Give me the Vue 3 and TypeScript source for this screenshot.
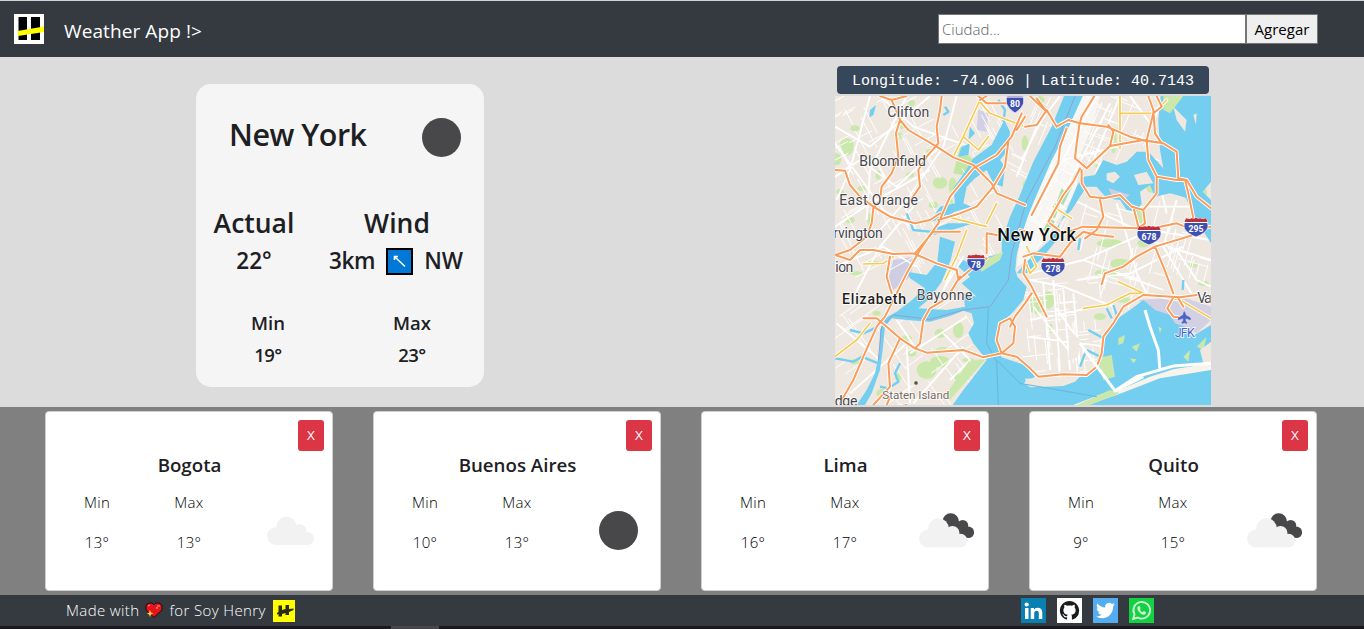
<script setup lang="ts">
import { ref } from 'vue'

interface City {
  name: string
  min: number
  max: number
  icon: 'cloud' | 'clear' | 'broken'
}

const query = ref('')

const cities = ref<City[]>([
  { name: 'Bogota', min: 13, max: 13, icon: 'cloud' },
  { name: 'Buenos Aires', min: 10, max: 13, icon: 'clear' },
  { name: 'Lima', min: 16, max: 17, icon: 'broken' },
  { name: 'Quito', min: 9, max: 15, icon: 'broken' },
])

function removeCity(name: string) {
  cities.value = cities.value.filter((c) => c.name !== name)
}

// Small local streets: short strokes following the direction of each district.
function streets(x: number, y: number, w: number, h: number, angle: number, gap: number, seed: number): string {
  let s = seed
  const rnd = () => {
    s = (s * 16807) % 2147483647
    return s / 2147483647
  }
  let d = ''
  const a = (angle * Math.PI) / 180
  const n = Math.floor((w * h) / (gap * gap * 4))
  for (let i = 0; i < n; i++) {
    const t = rnd() > 0.5 ? a : a + Math.PI / 2
    const px = x + rnd() * w
    const py = y + rnd() * h
    const len = gap * (1.5 + rnd() * 3)
    d += `M${px.toFixed(0)} ${py.toFixed(0)}l${(Math.cos(t) * len).toFixed(0)} ${(Math.sin(t) * len).toFixed(0)}`
  }
  return d
}

const minor = [
  streets(15, 108, 500, 500, 62, 24, 7),
  streets(620, 108, 380, 220, 112, 18, 31),
  streets(570, 300, 170, 240, 118, 14, 77),
  streets(760, 420, 380, 260, 15, 24, 51),
  streets(590, 640, 260, 300, 84, 18, 93),
  streets(15, 700, 420, 330, 55, 34, 12),
].join('')

// Parks as blots: x, y, rx, ry
const parks = [
  [50, 260, 22, 26], [20, 298, 14, 18], [75, 205, 14, 9], [205, 228, 14, 10], [215, 195, 8, 12], [330, 368, 22, 18],
  [368, 378, 12, 26], [310, 435, 14, 10], [360, 435, 10, 20], [95, 385, 12, 8], [145, 345, 8, 14], [300, 275, 12, 8],
  [30, 395, 12, 8], [60, 480, 14, 10], [240, 345, 12, 8], [245, 130, 10, 10], [120, 480, 8, 20], [400, 300, 18, 24],
  [590, 375, 12, 16], [630, 120, 14, 12], [585, 250, 10, 24], [815, 318, 20, 8], [966, 384, 18, 14], [850, 240, 10, 40],
  [940, 550, 18, 12], [930, 460, 12, 30], [1115, 400, 16, 22], [840, 550, 40, 12], [830, 640, 36, 12], [870, 610, 32, 14],
  [620, 735, 24, 26], [655, 720, 18, 26], [880, 720, 24, 8], [810, 770, 18, 10], [740, 850, 22, 10], [660, 805, 8, 14],
  [230, 835, 16, 9], [330, 820, 16, 14], [340, 870, 22, 9], [385, 810, 16, 24], [245, 880, 14, 10], [290, 930, 30, 26],
  [330, 905, 30, 18], [205, 950, 10, 12], [155, 1000, 16, 14], [75, 905, 16, 8], [140, 760, 12, 8], [415, 900, 18, 6],
  [380, 950, 8, 18], [80, 640, 20, 6], [130, 610, 22, 8], [350, 620, 14, 7], [1090, 615, 14, 8], [1120, 670, 16, 8],
]

const yellowRoads =
  'M450 120L400 230L370 290M400 230L445 270L475 230M500 430L470 490M445 120L480 160L585 200M585 600L600 640L620 620M410 510L380 590L345 660M120 790L80 840L15 890M100 612L160 610L190 590M350 470L470 500M760 745L830 735L900 700L930 700M865 665L940 700L1050 720L1143 775M870 108V265M870 160H970L1010 120M670 440L725 475M590 560L620 620'

const shields = [
  { x: 555, y: 127, w: 54, h: 64, n: '80' },
  { x: 438, y: 609, w: 56, h: 52, n: '78' },
  { x: 669, y: 622, w: 74, h: 58, n: '278' },
  { x: 957, y: 526, w: 74, h: 58, n: '678' },
  { x: 1098, y: 502, w: 74, h: 58, n: '295' },
]
</script>

<template>
  <div class="app">
    <header class="nav">
      <svg class="brand" viewBox="0 0 30 30">
        <rect width="30" height="30" fill="#fff" />
        <path d="M4.500 3H13V26H4.500ZM17 3H26V26H17Z" fill="#000" />
        <path d="M3.500 17L30 12.500V18L4 22Z" fill="#ff0" />
      </svg>
      <span class="title">Weather App !&gt;</span>
      <form class="search" @submit.prevent>
        <input v-model="query" type="text" placeholder="Ciudad..." />
        <button type="submit">Agregar</button>
      </form>
    </header>

    <main class="detail">
      <section class="current">
        <div class="head">
          <h2>New York</h2>
          <svg class="moon" viewBox="0 0 40 40"><circle cx="19.500" cy="20.500" r="19.500" fill="#48484a" /></svg>
        </div>
        <div class="now">
          <div class="col actual">
            <h3>Actual</h3>
            <p>22°</p>
          </div>
          <div class="col wind">
            <h3>Wind</h3>
            <p>
              <span class="speed">3km</span>
              <svg class="arrow" viewBox="0 0 27 27">
                <rect x="1" y="1" width="25" height="25" fill="#0078d7" stroke="#000" stroke-width="2" />
                <path d="M19 18.500L9 9M8.500 12V8.500H12" fill="none" stroke="#fff" stroke-width="1.600" />
              </svg>
              <span class="dir">NW</span>
            </p>
          </div>
        </div>
        <div class="range">
          <div><h5>Min</h5><p>19°</p></div>
          <div><h5>Max</h5><p>23°</p></div>
        </div>
      </section>

      <section class="location">
        <div class="coords">Longitude: -74.006 | Latitude: 40.7143</div>
        <svg class="map" viewBox="15 108 1128 927" preserveAspectRatio="none">
          <rect x="15" y="108" width="1128" height="927" fill="#efe8e1" />
          <!-- Manhattan and airports -->
          <path d="M760 108L660 300L575 500L560 620L600 600L690 470L740 390L745 300L790 190L810 108Z" fill="#f8f6f3" />
          <path d="M190 600L255 590L240 650L190 690L175 660Z" fill="#cfcde2" />
          <path d="M445 150L475 160L470 215L440 210Z" fill="#d3d0e4" />
          <path d="M925 720L1060 712L1143 740V780L1100 820L1060 800L1010 790L960 750Z" fill="#d3d0e4" />

          <g fill="#cbe8ac">
            <ellipse v-for="(p, i) in parks" :key="i" :cx="p[0]" :cy="p[1]" :rx="p[2]" :ry="p[3]" />
          </g>
          <path d="M390 260L440 310L420 350L370 340Z" fill="#c3e5a5" />

          <path :d="minor" fill="none" stroke="#fff" stroke-width="3" />
          <path
            d="M15 200L120 260L300 108M120 108L60 330L20 420M15 350L90 300L200 380L330 260M380 108L340 260L230 420L150 510M15 250L160 450L260 510M230 108L120 330L110 480M420 260L250 200L150 108M15 500L120 430L300 330M15 620L160 560L260 620M60 730L150 560L250 440M560 350L620 200L690 108M575 300L650 150M620 450L800 108M650 500L840 130M700 300L900 250M790 300L870 108M900 108L960 190L1010 108M730 420L900 500L1143 540M760 600L920 530L1143 600M740 660L900 640L1060 560M600 640L760 600L1000 690M860 430L900 560L920 640L950 700M600 660L700 680L850 740M610 740L740 900M640 670L660 930M670 660L690 930M700 690L720 930M730 700L750 920M600 780L800 740M590 830L830 860M680 745L850 995M1040 420L1000 560L1090 710M1040 570L1100 660L1143 680M240 880L410 770M400 860L250 1030M230 860L240 1030M60 1000L230 850M20 790L150 900M340 820L420 900L360 960M200 780L260 870M380 600L340 690L400 590M980 330L1010 460M920 440L1080 440"
            fill="none" stroke="#fff" stroke-width="5.500" stroke-linejoin="round"
          />

          <!-- Water -->
          <g fill="#73cef0">
            <path d="M702 108H758L715 205L663 305L620 405L595 465L575 525L560 585L556 630L562 650L590 680L580 720L550 755L515 790L502 830L505 870L515 892L585 915L615 950L580 970L600 980L735 965L755 945L800 925L815 900L820 850L840 800L870 770L900 750L940 720L975 750L1020 765L1035 790L1065 800L1085 830L1143 795V1035H368L400 990L470 900L430 850L415 820L432 790L425 760L400 752L360 768L300 785L230 780L185 775L165 800L158 870L150 930L125 1000L105 1035H80L110 990L135 940L148 880L150 810L165 775L200 755L240 725L285 685L240 655L232 635L290 645L322 605L330 530L375 545L362 600L335 665L300 715L265 745L350 750L405 740L400 700L440 710L395 670L420 650L385 620L400 600L440 620L475 590L515 580L515 545L540 470L570 405L610 305L665 200Z" />
            <path d="M992 108H1143V365L1118 395L1143 420V550L1090 465L1068 414L1045 405L1040 350L1000 325L990 270L985 180Z" />
            <path d="M660 540L710 450L742 375L762 350L795 345L820 300L860 315L890 305L920 275L955 275L1000 325L1045 345L1060 410L1020 400L975 410L960 375L930 395L935 430L920 455L890 450L870 420L830 415L800 380L770 380L750 410L725 450L690 485L680 540L640 590L590 640L560 640L590 605Z" />
            <path d="M523 180L540 215L535 270L510 300L525 320L518 380L490 370L470 330L435 355L410 380L400 430L425 440L375 455L340 475L300 485L330 440L375 430L370 385L405 335L430 295L485 255L505 215Z" />
            <path d="M120 150L138 135L130 165L118 172ZM420 200L435 220L415 240ZM395 260L420 250L415 285L385 290ZM300 510L355 490L430 490L350 515L310 525Z" />
          </g>
          <g fill="none" stroke="#73cef0" stroke-width="7" stroke-linejoin="round">
            <path d="M15 895L70 905L95 890L145 910M60 810L100 820L145 800M210 910L195 940L205 965L175 985L150 980M230 460L250 510L300 515M345 140L355 155L340 165M505 120L525 150L520 185M830 745L845 775M850 735L860 765M775 810L820 835M770 870L810 890L800 920M765 880L750 920M1060 660L1058 690M750 535L745 570" />
          </g>

          <!-- Land in the water -->
          <g fill="#efe8e1">
            <path d="M830 340L855 335L870 350L850 370L830 360ZM912 345L950 335L970 370L925 375ZM1030 140L1070 180L1065 215L1040 180ZM1090 165L1100 160L1098 195ZM585 962L715 955L735 965L700 978L600 982ZM585 956L620 955L590 970Z" />
            <path d="M1143 910L1030 928L960 950L880 985L820 1000L730 1035H770L860 1005L990 955L1143 930Z" fill="#f8f4ec" />
            <path d="M740 1035L840 990L870 1000L780 1035ZM800 895L845 885L855 950L820 960Z" fill="#cbe8ac" />
            <path d="M865 835L885 825L880 850L865 855ZM905 860L930 850L920 875ZM900 895L920 898L910 910ZM1060 890L1080 870L1075 905ZM985 800L995 805L990 820ZM1100 860L1130 830L1120 870ZM440 610L520 575L510 600L455 635ZM1000 108H1060L1020 160L1000 150ZM415 905L470 895L360 1020L340 1015Z" fill="#cbe8ac" />
            <path d="M720 810L750 840L745 890L715 900ZM1143 845L1110 870L1120 910L1143 905Z" />
          </g>
          <path d="M835 385L900 405L885 415L845 405Z" fill="#cfcde2" />
          <path d="M690 430L715 380L735 340L750 330L700 435ZM650 520L668 480L675 485Z" fill="#a9deb8" />
          <path d="M640 510L655 480L670 480L655 520ZM662 470L675 430L690 435L675 475ZM680 425L695 385L705 395L690 430Z" fill="#b5dfa0" />

          <!-- Ferry and boundary lines -->
          <g fill="none" stroke-width="3">
            <path d="M735 108L675 260L590 420L545 580L535 660L480 740L400 750L300 778L190 765L155 800L145 900" stroke="#8fa3cf" />
            <path d="M475 745L470 850L500 905L505 1035M500 900L570 970L800 1010" stroke="#68b5dd" />
          </g>

          <!-- Secondary highways -->
          <g fill="none" stroke-linejoin="round" stroke-linecap="round">
            <path v-for="k in 2" :key="k" :d="yellowRoads" :stroke="k === 1 ? '#fff' : '#f6cb55'" :stroke-width="k === 1 ? 10 : 5" />
          </g>

          <!-- Interstates -->
          <g fill="none" stroke-linejoin="round" stroke-linecap="round">
            <path v-for="k in 2" :key="k" :stroke="k === 1 ? '#fff' : '#fa9c5a'" :stroke-width="k === 1 ? 11.500 : 6"
              d="M150 108L185 120L210 180L235 210L320 260L370 292L430 315L485 370L500 400L585 435M210 180L198 220L205 290L185 340L155 380L150 420L130 445L125 490L110 530L60 570L15 585M15 330L45 332L60 375L90 410L130 440L180 470L255 490L300 480L330 460M185 120L230 108M335 108L330 150L320 200L325 250L290 290L265 330L270 380L235 430M445 108L470 130L530 130M575 160L545 230L500 285L430 325L360 410L325 490L300 525L270 570L230 640L200 700L165 770L140 800L100 890L70 960L30 1030M585 170L560 210M535 245L525 320L490 380L440 440L390 460L325 480M470 108L450 120M585 200L620 195L650 150L680 200L715 180L750 190L830 200L900 230L945 242L1000 250L1040 275L1045 355L1070 360L1100 410L1143 445M650 155L620 115M650 155L600 108M793 108L755 170L748 195L740 250L735 295L770 325L840 258L850 215L835 195M840 258L940 240L1000 250M980 108L995 140L970 160L950 240L955 300L980 350L980 400L940 450L905 440L870 405L820 415L780 410L755 370L755 330M980 350L1040 360L1065 360L1075 400L1090 475M955 108L970 150L975 220L995 250M810 420L820 470L800 510L765 535M940 450L945 490L925 505L760 500L700 520L660 490M910 440L925 500M710 205L690 260L685 310L605 465M655 485L700 405L730 365L750 325M570 510L605 520L600 530M1143 500L1090 510L1040 490L945 510M690 590L720 550L760 515L800 525L850 530M580 590L610 580L690 590M585 600L580 640L605 680L650 770M605 700L585 730L555 770L540 800M15 585L60 600L90 570L130 570L190 582L255 580L310 515L390 515M180 590L170 650L185 700M255 582L320 610L380 630L385 660L420 630L470 595M470 580L470 520L500 525M390 650L350 715L300 745L280 780L270 850L255 865M100 775L140 775L170 800L210 835L255 865L290 878L400 870L460 892L515 880L550 850L555 800L540 775L510 790L500 840L515 880L560 890L600 925L625 950L700 943L770 945L800 920L815 880L820 830L850 790L880 740L940 705L1050 712L1100 705M210 835L175 910L180 980L130 1035M815 673L825 640L880 620L920 590L975 560L1090 525M975 560L1000 620L1030 700M1030 712L1012 745L1030 770L1045 772M1045 715L1060 740M170 1035L185 1000M230 1035L205 1040" />
          </g>

          <path d="M1143 910L1030 918L920 950L855 992L790 905L750 850M855 992L940 950M945 750L960 800L985 870L990 930" fill="none" stroke="#fff" stroke-width="9" />

          <g v-for="s in shields" :key="s.n" :transform="`translate(${s.x - s.w / 2} ${s.y - s.h / 2}) scale(${s.w / 60} ${s.h / 56})`">
            <path d="M6 2Q14 6 20 2Q26 5 30 0Q34 5 40 2Q46 6 54 2Q62 20 58 32Q52 46 30 56Q8 46 2 32Q-2 20 6 2Z" fill="#3f4fb0" stroke="#fff" stroke-width="2" />
            <path d="M6 2Q14 6 20 2Q26 5 30 0Q34 5 40 2Q46 6 54 2L58 12H2Z" fill="#c42d32" />
            <path d="M1 14H59" stroke="#fff" stroke-width="3" />
          </g>
          <g class="num">
            <text v-for="s in shields" :key="s.n" :x="s.x" :y="s.y + 14">{{ s.n }}</text>
          </g>

          <g class="labels">
            <text x="172" y="171" textLength="126">Clifton</text>
            <text x="88" y="319" textLength="200">Bloomfield</text>
            <text x="28" y="434" textLength="236">East Orange</text>
            <text x="10" y="535" textLength="148">rvington</text>
            <text x="16" y="635" textLength="54">ion</text>
            <text x="260" y="719" textLength="167">Bayonne</text>
            <text x="14" y="1037" textLength="68">dge</text>
            <text x="1102" y="730" textLength="60">Van</text>
            <text class="strong" x="36" y="732" textLength="192">Elizabeth</text>
            <text class="big" x="502" y="542" textLength="236">New York</text>
            <text class="small" x="157" y="1017" textLength="201">Staten Island</text>
            <text class="blue" x="1034" y="830" textLength="60">JFK</text>
          </g>
          <circle cx="258" cy="969" r="6" fill="#4b5a3c" stroke="#fff" />
          <path d="M1063 755Q1066 757 1066 765L1081 774V779L1066 774V783L1070 787V790L1063 788L1056 790V787L1060 783V774L1045 779V774L1060 765Q1060 757 1063 755Z" fill="#4a63c8" stroke="#4a63c8" stroke-width="2" />
        </svg>
      </section>
    </main>

    <section class="cities">
      <article v-for="c in cities" :key="c.name" class="card">
        <button class="close" @click="removeCity(c.name)">X</button>
        <h5>{{ c.name }}</h5>
        <div class="stats">
          <div class="stat"><span>Min</span><span>{{ c.min }}°</span></div>
          <div class="stat"><span>Max</span><span>{{ c.max }}°</span></div>
          <svg class="icon" viewBox="0 0 60 60">
            <circle v-if="c.icon === 'clear'" cx="32.500" cy="37.500" r="19.500" fill="#48484a" />
            <g v-else-if="c.icon === 'cloud'" fill="#f2f2f2">
              <circle cx="18" cy="43" r="9" />
              <circle cx="28.500" cy="33.500" r="10" />
              <circle cx="41.500" cy="38" r="7" />
              <circle cx="49.500" cy="45.500" r="6.500" />
              <path d="M18 36L28 30L42 36L50 44V52H18Z" />
            </g>
            <template v-else>
              <g fill="#48484a">
                <circle cx="36.700" cy="28.500" r="8.300" />
                <circle cx="48.700" cy="32.500" r="5.500" />
                <circle cx="54.300" cy="39.300" r="5.800" />
                <path d="M37 29L50 31L54 42L44 42Z" />
              </g>
              <g fill="#f2f2f2">
                <circle cx="14" cy="45.500" r="9" />
                <circle cx="24.500" cy="35.500" r="10.300" />
                <circle cx="38.500" cy="40" r="7" />
                <circle cx="46.500" cy="47.500" r="6.800" />
                <path d="M14 40L24 32L38 38L47 46V54.300H14Z" />
              </g>
            </template>
          </svg>
        </div>
      </article>
    </section>

    <footer class="foot">
      <span class="made">Made with</span>
      <svg class="heart" viewBox="0 0 18 16">
        <path d="M9 15.500L1 8V3L4 1H7L9 3L11 1H14L17 3V8Z" fill="#e8121c" stroke="#111" stroke-width="1" />
        <path d="M3 4L5 3M12 4H15" stroke="#ff8d8d" stroke-width="1.200" />
        <path d="M5 8L6 10.500L8.500 11.500L6 12.500L5 15L4 12.500L2 11.500L4 10.500ZM12 5L13 6L12 7L11 6Z" fill="#ffc832" />
      </svg>
      <span class="for">for Soy Henry</span>
      <svg class="henry" viewBox="0 0 22 22">
        <rect width="22" height="22" fill="#ff0" />
        <path d="M5.500 5.500H9V10L12.500 9V5H16V9L20.500 8.500V10L16 12V15H12.500V13L9 14V16.500H5.500V14L4 14.500V13L5.500 12Z" fill="#2a2a18" />
      </svg>
      <nav class="social">
        <svg viewBox="0 0 25 25">
          <rect width="25" height="25" fill="#0a7fb2" />
          <path d="M4 10H7.500V21H4ZM9.700 10H13V11.500Q14.200 9.700 16.700 9.700Q21.300 9.700 21.300 15V21H17.800V15.500Q17.800 12.700 15.700 12.700Q13.200 12.700 13.200 15.500V21H9.700Z" fill="#fff" />
          <circle cx="5.700" cy="6.500" r="2.100" fill="#fff" />
        </svg>
        <svg viewBox="0 0 25 25">
          <rect width="25" height="25" fill="#fff" />
          <path transform="translate(2.900 2.900) scale(1.200)" fill="#1b1b1d" d="M8 0C3.580 0 0 3.580 0 8c0 3.540 2.290 6.530 5.470 7.590.4.070.55-.17.55-.38 0-.19-.01-.82-.01-1.490-2.010.37-2.530-.49-2.690-.94-.09-.23-.48-.94-.82-1.130-.28-.15-.68-.52-.01-.53.63-.01 1.080.58 1.230.82.72 1.210 1.870.87 2.330.66.07-.52.28-.87.51-1.070-1.780-.2-3.640-.89-3.640-3.950 0-.87.31-1.590.82-2.150-.08-.2-.36-1.020.08-2.120 0 0 .67-.21 2.200.82.64-.18 1.320-.27 2-.27s1.360.09 2 .27c1.530-1.040 2.200-.82 2.200-.82.44 1.100.16 1.920.08 2.120.51.56.82 1.270.82 2.150 0 3.070-1.870 3.750-3.650 3.950.29.25.54.73.54 1.480 0 1.070-.01 1.930-.01 2.200 0 .21.15.46.55.38A8.010 8.010 0 0 0 16 8c0-4.420-3.580-8-8-8z" />
        </svg>
        <svg viewBox="0 0 25 25">
          <rect width="25" height="25" fill="#55acee" />
          <path transform="translate(3 3) scale(.79)" fill="#fff" d="M23.950 4.570a10 10 0 0 1-2.820.77 4.960 4.960 0 0 0 2.160-2.720c-.95.55-2 .96-3.130 1.180a4.920 4.920 0 0 0-8.380 4.480C7.690 8.090 4.070 6.130 1.640 3.160a4.820 4.820 0 0 0-.67 2.480c0 1.710.87 3.210 2.190 4.100a4.900 4.900 0 0 1-2.230-.62v.06a4.920 4.920 0 0 0 3.950 4.830 5 5 0 0 1-2.210.08 4.940 4.940 0 0 0 4.600 3.420A9.870 9.870 0 0 1 0 19.540a13.990 13.990 0 0 0 7.550 2.210c9.050 0 14-7.500 14-13.980 0-.21 0-.42-.02-.63a9.940 9.940 0 0 0 2.420-2.570z" />
        </svg>
        <svg viewBox="0 0 25 25">
          <rect width="25" height="25" fill="#16d043" />
          <path d="M4.200 20.800L5.500 16.300A8.300 8.300 0 1 1 8.700 19.500Z" fill="none" stroke="#c8f7d0" stroke-width="1.900" />
          <path d="M9.500 8.200Q10.700 7.700 11.100 9L11.600 10.300L10.800 11.400Q11.800 13.400 13.800 14.200L14.900 13.100L17 14.200Q17.200 16.200 15 16.700Q12.700 16.900 10.200 14.200Q7.500 11 8.500 9Z" fill="#c8f7d0" />
        </svg>
      </nav>
    </footer>
    <div class="edge"><span></span></div>
  </div>
</template>

<style>
body {
  margin: 0;
  overflow: hidden;
}
</style>

<style scoped>
* {
  box-sizing: border-box;
}
h2, h3, h5, p {
  margin: 0;
}
svg {
  display: block;
  flex: none;
}
.app {
  width: 1364px;
  height: 629px;
  display: flex;
  flex-direction: column;
  overflow: hidden;
  font-family: "Open Sans", "Noto Sans", sans-serif;
  color: #1d2023;
}
.nav {
  height: 57px;
  border-top: 1px solid #ccd5d9;
  background: #343a40;
  display: flex;
  align-items: center;
  padding: 0 46px 0 14px;
}
.brand {
  width: 30px;
  height: 30px;
}
.title {
  margin-left: 20px;
  margin-top: 4px;
  color: #fff;
  font-size: 19px;
  letter-spacing: 0.1px;
  line-height: 30px;
}
.search {
  margin-left: auto;
  display: flex;
}
.search input {
  width: 308px;
  height: 30px;
  border: 1px solid #767676;
  border-radius: 0;
  padding: 1px 3px;
  background: #fff;
  font: 300 15px "Open Sans", sans-serif;
}
.search input::placeholder {
  color: #606060;
}
.search button {
  width: 72px;
  height: 30px;
  border: 1px solid #767676;
  padding: 0;
  background: #efefef;
  font: 400 15px "Open Sans", sans-serif;
  color: #000;
}
.detail {
  height: 350px;
  background: #dcdcdc;
  display: flex;
  justify-content: space-between;
  align-items: flex-start;
  padding: 0 153px 0 196px;
}
.current {
  width: 288px;
  height: 303px;
  margin-top: 27px;
  border-radius: 15px;
  background: #f5f5f5;
  font-weight: 600;
}
.head {
  display: flex;
  justify-content: space-between;
  height: 118px;
  padding: 33px 22px 0 33px;
}
.head h2 {
  font-size: 30.500px;
  font-weight: 600;
  line-height: 34px;
  letter-spacing: -0.500px;
}
.moon {
  width: 40px;
  height: 40px;
}
.now {
  display: flex;
  height: 109px;
  text-align: center;
}
.now h3 {
  font-size: 26.500px;
  font-weight: 600;
  line-height: 42px;
}
.now p {
  font-size: 22.500px;
  line-height: 34px;
}
.actual {
  width: 116px;
}
.wind {
  width: 170px;
}
.wind p {
  display: flex;
  justify-content: center;
  align-items: center;
  gap: 11px;
  padding-right: 2px;
}
.speed {
  letter-spacing: -0.300px;
}
.arrow {
  width: 27px;
  height: 27px;
}
.range {
  display: flex;
  text-align: center;
}
.range div {
  width: 144px;
}
.range h5,
.range p {
  font-size: 18.500px;
  font-weight: 600;
  line-height: 32px;
}
.range h5 {
  margin-top: -4px;
}
.range p {
  letter-spacing: -0.500px;
}
.location {
  width: 376px;
  padding-top: 9px;
}
.coords {
  height: 28px;
  margin: 0 2px 2px;
  border-radius: 4px;
  background: #37475a;
  color: #fff;
  font: 15px/31px "Liberation Mono", monospace;
  text-align: center;
  white-space: pre;
}
.map {
  width: 376px;
  height: 309px;
}
.map text {
  font-family: "Roboto", sans-serif;
}
.labels text {
  font-size: 42px;
  fill: #45454b;
  stroke: #fff;
  stroke-width: 4px;
  paint-order: stroke;
}
.labels .strong {
  font-weight: 500;
  fill: #1c1c1e;
}
.labels .big {
  font-size: 54px;
  font-weight: 500;
  fill: #111;
}
.labels .small {
  font-size: 35px;
  fill: #7a6a60;
}
.labels .blue {
  font-size: 37px;
  fill: #4a63c8;
}
.num text {
  font-size: 26px;
  font-weight: 700;
  fill: #fff;
  text-anchor: middle;
}
.cities {
  height: 188px;
  background: #808080;
  display: flex;
  gap: 40px;
  padding: 4px 45px;
}
.card {
  width: 288px;
  height: 180px;
  border: 1px solid #d0d0d0;
  border-radius: 4px;
  background: #fff;
  display: flex;
  flex-direction: column;
}
.close {
  align-self: flex-end;
  width: 26px;
  height: 31px;
  margin: 8px 8px 0 0;
  border: 0;
  border-radius: 3px;
  padding: 0;
  background: #dc3545;
  color: #fff;
  font: 400 13.500px/31px "Open Sans", sans-serif;
}
.card h5 {
  font-size: 18.700px;
  font-weight: 600;
  line-height: 28px;
  margin-bottom: 2px;
  padding-left: 1px;
  text-align: center;
}
.stats {
  display: flex;
  padding-left: 5px;
}
.stat {
  width: 92px;
  display: flex;
  flex-direction: column;
  align-items: center;
  padding-top: 1px;
  font-size: 15px;
  font-weight: 300;
  letter-spacing: 0.300px;
  color: #000;
}
.stat span {
  line-height: 40px;
}
.icon {
  width: 60px;
  height: 60px;
  margin: 12px 0 0 23px;
}
.foot {
  height: 31px;
  background: #343a40;
  display: flex;
  align-items: center;
  padding: 0 210px 0 66px;
  color: #fff;
  font-size: 15px;
  font-weight: 300;
}
.made,
.for {
  letter-spacing: 0.380px;
  margin-top: -2px;
}
.heart {
  width: 18px;
  height: 16px;
  margin: -1px 6px 0;
}
.henry {
  width: 22px;
  height: 22px;
  margin-left: 7px;
}
.social {
  margin-left: auto;
  display: flex;
  gap: 11px;
}
.social svg {
  width: 25px;
  height: 25px;
}
.edge {
  height: 3px;
  background: #1b191f;
}
.edge span {
  display: block;
  width: 48px;
  height: 3px;
  margin-left: 391px;
  background: #48464c;
}
</style>
